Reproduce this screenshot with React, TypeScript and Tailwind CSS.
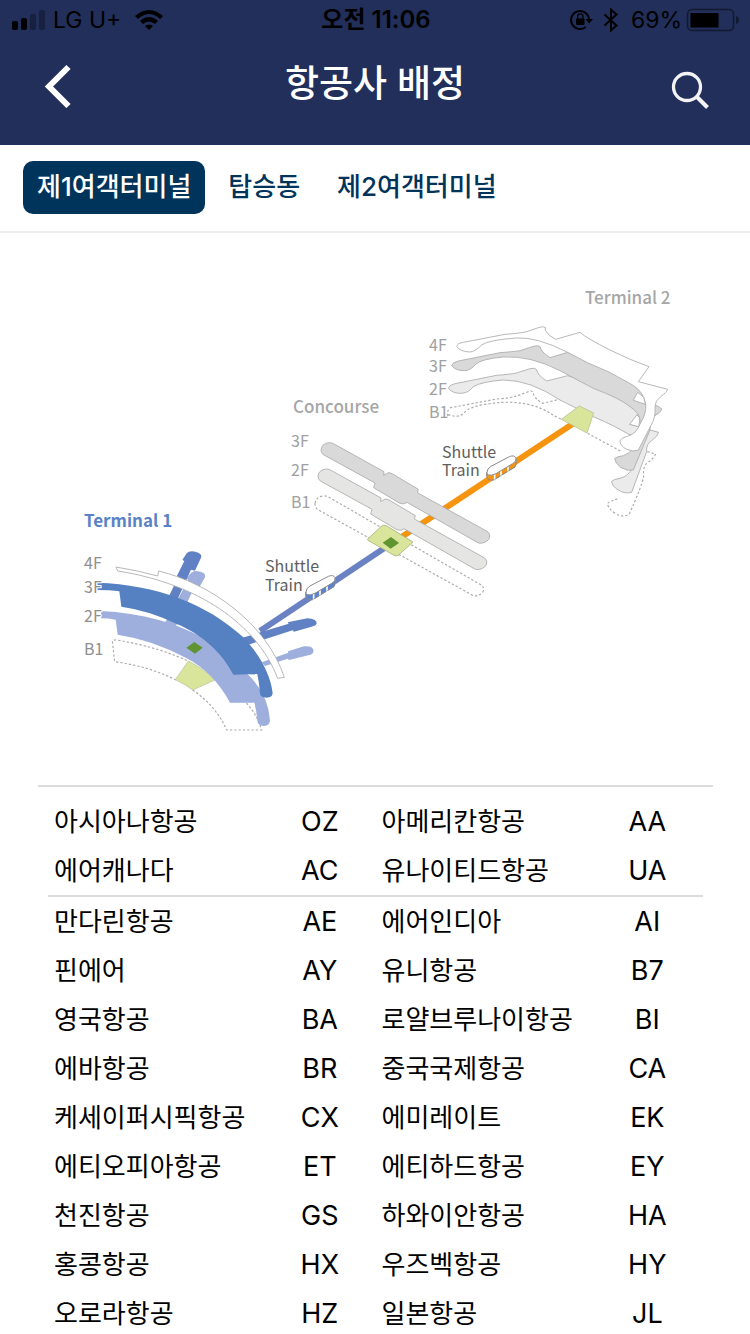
import React, { useState } from 'react';

const TABS = ['제1여객터미널', '탑승동', '제2여객터미널'];

type Row = [string, string, string, string];

const ALLIANCE: Row[] = [
  ['아시아나항공', 'OZ', '아메리칸항공', 'AA'],
  ['에어캐나다', 'AC', '유나이티드항공', 'UA'],
];

const OTHERS: Row[] = [
  ['만다린항공', 'AE', '에어인디아', 'AI'],
  ['핀에어', 'AY', '유니항공', 'B7'],
  ['영국항공', 'BA', '로얄브루나이항공', 'BI'],
  ['에바항공', 'BR', '중국국제항공', 'CA'],
  ['케세이퍼시픽항공', 'CX', '에미레이트', 'EK'],
  ['에티오피아항공', 'ET', '에티하드항공', 'EY'],
  ['천진항공', 'GS', '하와이안항공', 'HA'],
  ['홍콩항공', 'HX', '우즈벡항공', 'HY'],
  ['오로라항공', 'HZ', '일본항공', 'JL'],
];

function StatusBar() {
  return (
    <div className="grid h-10 grid-cols-[1fr_auto_1fr] items-center pr-2.5 pl-3 text-[23px] leading-10 text-black">
      <div className="flex items-center">
        <svg className="mr-2 h-5 w-[33px]" viewBox="0 0 33 20" aria-hidden="true">
          <rect x="0" y="11" width="6" height="9" rx="2" />
          <rect x="9" y="8" width="6" height="12" rx="2" />
          <rect x="18" y="4" width="6" height="16" rx="2" opacity=".3" />
          <rect x="27" y="0" width="6" height="20" rx="2" opacity=".3" />
        </svg>
        <span>LG U+</span>
        <svg className="ml-3.5 h-5 w-7" viewBox="0 0 28 20" aria-hidden="true">
          <path d="M0 6Q14-6 28 6L25 9Q14-1 3 9Z" />
          <path d="M5 11Q14 3 23 11L20 14Q14 9 8 14Z" />
          <path d="M10 16Q14 13 18 16L14 20Z" />
        </svg>
      </div>
      <span className="text-2xl leading-10 font-semibold">오전 11:06</span>
      <div className="flex items-center justify-end">
        <svg className="h-6 w-6" viewBox="0 0 24 24" aria-hidden="true">
          <path d="M16.800 18.900A9 9 0 1 1 20 11.200" fill="none" stroke="#000" strokeWidth="1.900" />
          <path d="M16.500 11H24L20.200 15.500Z" />
          <rect x="7" y="10.500" width="8.500" height="6.500" rx="1" />
          <path d="M8.700 11V8.500a2.600 2.600 0 0 1 5.200 0V11" fill="none" stroke="#000" strokeWidth="1.300" />
        </svg>
        <svg className="ml-2.5 h-6 w-4" viewBox="0 0 16 24" aria-hidden="true">
          <path d="M1.500 6.500L13.500 17.500L8 22.500V1.500L13.500 6.500L1.500 17.500" fill="none" stroke="#000" strokeWidth="1.900" />
        </svg>
        <span className="ml-3">69%</span>
        <svg className="ml-1 h-6 w-[54px]" viewBox="0 0 54 24" aria-hidden="true">
          <rect x="1.500" y="1.500" width="46" height="21" rx="4.500" fill="none" stroke="#000" strokeOpacity=".45" strokeWidth="1.600" />
          <rect x="4.500" y="5" width="28" height="14.500" />
          <path d="M50 8Q53 9 53 12T50 16Z" opacity=".45" />
        </svg>
      </div>
    </div>
  );
}

function Train({ color, transform }: { color: string; transform?: string }) {
  return (
    <g transform={transform}>
      <path d="M137 606V618Q141 632 158 629L222 590Q226 586 226 565Z" fill={color} stroke="#8a8a8a" strokeWidth="3" />
      <path d="M161 630V608M180 618V600M201 606V588" stroke="#fff" strokeWidth="5" />
      <path d="M158 629L224 588" stroke="#8a8a8a" strokeWidth="2" />
      <path
        d="M138 606Q138 595 150 588L205 559Q220 553 225 563Q228 573 215 580L165 610Q150 617 141 614Q138 611 138 606Z"
        fill="#fff"
        stroke="#8a8a8a"
        strokeWidth="3"
      />
    </g>
  );
}

const CONCOURSE_BAR =
  'M183 180Q185 160 208 158Q217 158 224 163L372 245L371 256L385 248Q391 248 398 252L475 298L472 308L683 425Q693 433 688 446Q674 463 655 459L441 337L434 341Q427 343 418 339L341 293L345 279L190 194Q183 188 183 180Z';

function TerminalMap() {
  return (
    <svg
      className="block h-auto w-full"
      viewBox="0 233 750 552"
      role="img"
      aria-label="Terminal 1, Concourse, Terminal 2"
      fill="none"
      strokeLinejoin="round"
    >
      <path d="M260 631L386 547" stroke="#6a82c4" strokeWidth="6" />
      <path d="M400 538L574 423" stroke="#f6930f" strokeWidth="6" />

      {/* Terminal 2 */}
      <g transform="translate(420 280) scale(.33333)" strokeWidth="2.500" stroke="#aaa">
        <path
          d="M84 408Q77 396 92 383L230 357Q270 354 290 348L325 335Q336 330 339 337Q342 355 368 370L434 354M84 404Q118 415 133 398Q145 382 190 374Q320 350 400 406L425 418M503 460L605 515M682 515L707 522Q700 537 680 550Q668 562 671 590Q665 620 627 704Q605 713 585 700Q562 683 563 670Q570 662 600 655"
          strokeDasharray="7 6"
          strokeWidth="3.500"
        />
        <path
          d="M85 325Q87 315 105 311L230 286Q270 283 290 279L330 266Q345 262 350 269Q352 285 380 303L443 287L640 350L662 400L652 410L630 433L716 457Q712 470 695 482Q678 492 680 515L635 637Q615 643 595 630Q575 618 575 604Q580 598 600 595Q625 590 640 560L655 465Q640 466 626 463Q590 440 520 410L420 360Q330 300 250 300Q185 305 160 320Q147 338 125 340Q98 341 85 325Z"
          fill="#ebebeb"
        />
        <path d="M651 404L629 433L656 440L660 415Z" fill="#fff" />
        <path
          d="M95 257Q97 247 115 243L240 218Q280 215 300 212L340 199Q355 194 361 201Q362 215 390 233L443 217L640 300L700 370L726 387Q722 398 705 407Q690 420 690 450L640 570Q622 575 602 562Q585 550 584 536Q590 529 610 527Q645 515 658 465L661 425Q659 398 630 380Q600 355 520 325L420 272Q330 226 250 231Q185 237 168 252Q150 272 135 272Q108 273 95 257Z"
          fill="#d9d9d9"
        />
        <path
          d="M110 200Q112 190 130 187L255 163Q300 160 320 155L355 143Q370 138 376 142Q377 148 375 150Q385 168 407 178L480 157Q500 175 570 210Q630 240 687 260L655 305L743 328Q742 335 722 350Q705 362 705 380Q708 412 692 438L655 510Q640 517 620 508Q600 498 600 482Q602 474 622 469Q650 462 662 428Q680 400 677 372Q671 336 638 315L565 275Q500 250 443 217Q350 170 290 174Q205 180 185 195Q165 215 150 216Q122 215 110 200Z"
          fill="#fff"
        />
        <path d="M653 337L640 361L676 373L671 352Z" fill="#fff" />
        <path d="M424 418L478 378L521 399L501 459Z" fill="#d9e59b" stroke="#bdc392" />
      </g>

      {/* Concourse */}
      <g transform="translate(260 390) scale(.33333)" strokeWidth="2.500" stroke="#aaa">
        <path
          d="M165 340Q168 320 190 318Q200 317 207 322L660 583Q675 592 670 603Q660 620 640 617L172 358Q165 350 165 340Z"
          strokeDasharray="7 6"
          strokeWidth="3.500"
        />
        <path d={CONCOURSE_BAR} transform="translate(-9 79)" fill="#e5e5e3" />
        <path d={CONCOURSE_BAR} fill="#d9d9d9" />
        <path d="M322 448L364 409Q370 403 379 407L459 456L416 495Q410 500 402 496L324 451Z" fill="#d9e59b" stroke="#a9b17c" />
        <path d="M368 458L393 441L417 459L392 476Z" fill="#5f9430" stroke="none" />
        <Train color="#5b82cf" />
        <Train color="#f6930f" transform="translate(543 -359)" />
      </g>

      {/* Terminal 1 */}
      <g transform="translate(70 500) scale(.33333)">
        <g stroke="#aaa" strokeWidth="3.500" strokeDasharray="7 6">
          <path d="M318 540Q240 500 134 485L127 424Q130 419 140 420Q260 440 352 482" />
          <path d="M368 570Q440 620 470 690H575Q560 640 526 606" />
        </g>
        <path d="M355 483Q400 505 435 540L368 570Q345 552 316 539Z" fill="#d9e59b" stroke="#b9bea0" strokeWidth="2" />
        <g fill="#9fafdd">
          <path d="M284 370L355 240L350 236Q362 214 378 213Q410 215 405 232L388 262L374 260L316 382Z" />
          <path d="M575 487L655 458L654 454L702 439Q728 436 731 452Q730 463 715 466L657 480L653 476L585 498Z" />
          <path d="M93 333C210 338 330 370 420 425L530 520Q595 580 600 662Q598 678 580 678Q564 677 562 662Q560 632 553 608H480C450 550 400 500 350 475Q250 420 143 404L137 359Q115 355 93 355Z" />
        </g>
        <g fill="#6081c4">
          <path d="M293 296L325 230L321 227L343 183L337 180L350 160Q358 151 376 155Q396 160 394 171L375 212L363 209L320 304Z" />
          <path d="M515 414L656 371L653 367L712 355Q740 356 740 370Q738 378 725 380L672 395L668 391L535 434Z" />
        </g>
        <path
          d="M82 248C260 255 410 310 520 412C570 465 602 525 608 580Q607 593 590 593Q570 593 570 580Q568 550 562 522L490 524C455 455 390 400 320 372Q240 332 154 320L148 274Q120 270 82 270Z"
          fill="#5580c1"
        />
        <path
          d="M138 201Q205 212 263 228L266 213C420 250 590 370 643 532L623 535C560 370 380 250 143 213Z"
          fill="#fff"
          stroke="#aaa"
          strokeWidth="2.500"
        />
        <path d="M349 443L373 426L398 443L375 461Z" fill="#5f9430" />
      </g>

      <g className="font-['Noto_Sans_CJK_KR',sans-serif]">
        <text x="84" y="527" fontSize="17" fontWeight="700" fill="#5a82c6">Terminal 1</text>
        <g fontSize="17" fontWeight="500" fill="#a6a6a6">
          <text x="293" y="413">Concourse</text>
          <text x="585" y="304">Terminal 2</text>
        </g>
        <text fontSize="16" fill="#8f8f8f" stroke="#fff" strokeWidth="2" paintOrder="stroke">
          <tspan x="84" y="569">4F</tspan>
          <tspan x="84" y="593">3F</tspan>
          <tspan x="84" y="622">2F</tspan>
          <tspan x="84" y="655">B1</tspan>
        </text>
        <text fontSize="16" fill="#a0a0a0">
          <tspan x="291" y="447">3F</tspan>
          <tspan x="291" y="476">2F</tspan>
          <tspan x="291" y="508">B1</tspan>
        </text>
        <text fontSize="16" fill="#a0a0a0">
          <tspan x="429" y="351">4F</tspan>
          <tspan x="429" y="372">3F</tspan>
          <tspan x="429" y="395">2F</tspan>
          <tspan x="429" y="418">B1</tspan>
        </text>
        <text fontSize="16" fill="#5e5e5e">
          <tspan x="265" y="572">Shuttle</tspan>
          <tspan x="265" y="591">Train</tspan>
        </text>
        <text fontSize="16" fill="#5e5e5e">
          <tspan x="442" y="458">Shuttle</tspan>
          <tspan x="442" y="476">Train</tspan>
        </text>
      </g>
    </svg>
  );
}

function AirlineRows({ rows }: { rows: Row[] }) {
  return (
    <>
      {rows.map(([nameA, codeA, nameB, codeB]) => (
        <tr key={codeA}>
          <td className="pl-1.5">{nameA}</td>
          <td className="text-center font-['Inter',sans-serif] text-[27px] leading-[49px]">{codeA}</td>
          <td className="pl-1.5">{nameB}</td>
          <td className="text-center font-['Inter',sans-serif] text-[27px] leading-[49px]">{codeB}</td>
        </tr>
      ))}
    </>
  );
}

export default function App() {
  const [active, setActive] = useState(0);

  return (
    <div className="flex h-screen flex-col overflow-hidden bg-white font-['Inter','Noto_Sans_CJK_KR',sans-serif] text-black">
      <header className="shrink-0 bg-[#212f5a]">
        <StatusBar />
        <div className="grid h-[105px] grid-cols-[1fr_auto_1fr] items-start px-10 text-white">
          <button type="button" aria-label="뒤로" className="mt-6 justify-self-start">
            <svg className="h-11 w-9" viewBox="0 0 36 44" fill="none">
              <path d="M28.500 3L9 22.500L28.500 42" stroke="#fff" strokeWidth="6" />
            </svg>
          </button>
          <h1 className="mt-5 text-[37px] leading-[48px] font-medium">항공사 배정</h1>
          <button type="button" aria-label="검색" className="mt-[30px] justify-self-end">
            <svg className="h-10 w-10" viewBox="0 0 40 40" fill="none" stroke="#f3f3f3">
              <circle cx="17" cy="17" r="13.500" strokeWidth="3.300" />
              <path d="M27 27L37.500 37.500" strokeWidth="4" />
            </svg>
          </button>
        </div>
      </header>

      <nav className="flex h-[88px] shrink-0 items-start gap-[9px] border-b-2 border-[#efefef] px-[23px] pt-4">
        {TABS.map((tab, i) => (
          <button
            key={tab}
            type="button"
            aria-pressed={i === active}
            onClick={() => setActive(i)}
            className={
              i === active
                ? 'h-[53px] rounded-[10px] bg-[#00345b] px-3.5 pb-0.5 text-[26px] font-medium text-white'
                : 'h-[53px] rounded-[10px] px-3.5 pb-0.5 text-[26px] font-medium text-[#00345b]'
            }
          >
            {tab}
          </button>
        ))}
      </nav>

      <main className="min-h-0 flex-1 overflow-y-auto [scrollbar-width:none]">
        <TerminalMap />
        <div className="mr-[37px] ml-[38px] border-t-2 border-[#dcdcdc] px-2.5 pt-2.5">
          <table
            className="w-full table-fixed border-separate border-spacing-0 text-[26px] leading-[49px]"
            aria-label="항공사 배정"
          >
            <colgroup>
              <col className="w-[33%]" />
              <col className="w-[17%]" />
              <col className="w-[33%]" />
              <col className="w-[17%]" />
            </colgroup>
            <tbody>
              <AirlineRows rows={ALLIANCE} />
            </tbody>
            <tbody className="[&>tr:first-child>td]:border-t-2 [&>tr:first-child>td]:border-[#dcdcdc]">
              <AirlineRows rows={OTHERS} />
            </tbody>
          </table>
        </div>
      </main>
    </div>
  );
}
